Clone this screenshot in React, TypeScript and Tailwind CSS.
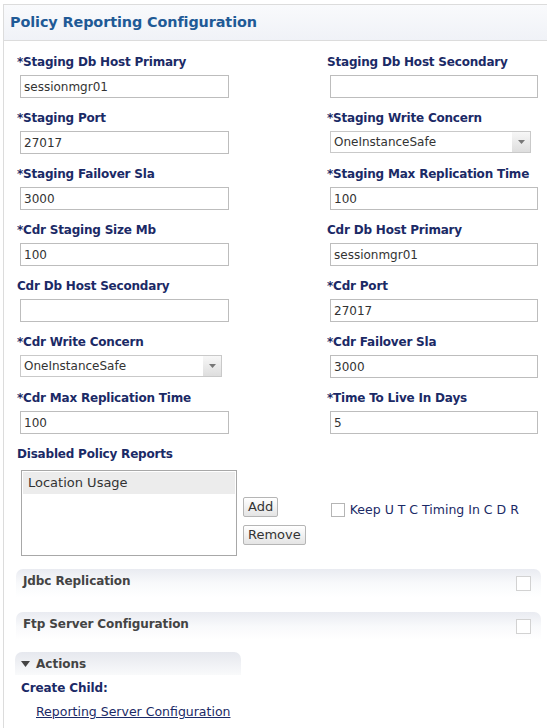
const font = { fontFamily: '"DejaVu Sans", Verdana, sans-serif' };

type Field = {
  label: string;
  value: string;
  required?: boolean;
  select?: boolean;
};

const leftFields: Field[] = [
  { label: "Staging Db Host Primary", value: "sessionmgr01", required: true },
  { label: "Staging Port", value: "27017", required: true },
  { label: "Staging Failover Sla", value: "3000", required: true },
  { label: "Cdr Staging Size Mb", value: "100", required: true },
  { label: "Cdr Db Host Secondary", value: "" },
  { label: "Cdr Write Concern", value: "OneInstanceSafe", required: true, select: true },
  { label: "Cdr Max Replication Time", value: "100", required: true },
];

const rightFields: Field[] = [
  { label: "Staging Db Host Secondary", value: "" },
  { label: "Staging Write Concern", value: "OneInstanceSafe", required: true, select: true },
  { label: "Staging Max Replication Time", value: "100", required: true },
  { label: "Cdr Db Host Primary", value: "sessionmgr01" },
  { label: "Cdr Port", value: "27017", required: true },
  { label: "Cdr Failover Sla", value: "3000", required: true },
  { label: "Time To Live In Days", value: "5", required: true },
];

function FormField({ field, wide }: { field: Field; wide: number }) {
  return (
    <div className="h-[56px]">
      <div className="h-[16px] text-[12px] font-bold leading-[16px] tracking-[-0.2px] text-[#1b2a66]">
        {field.required ? "*" : ""}
        {field.label}
      </div>
      {field.select ? (
        <div
          className="relative ml-[3px] mt-[5px] flex h-[22px] items-center border border-[#c9c9c9] bg-white pl-[3px] text-[12px] text-[#333]"
          style={{ width: wide - 7 }}
        >
          {field.value}
          <div className="absolute right-0 top-0 flex h-full w-[18px] items-center justify-center bg-gradient-to-b from-[#f7f7f7] to-[#dedede]">
            <svg width="7" height="4" viewBox="0 0 7 4">
              <path d="M0 0h7L3.5 4z" fill="#777" />
            </svg>
          </div>
        </div>
      ) : (
        <div
          className="ml-[3px] mt-[5px] flex h-[23px] items-center border border-[#bdbdbd] bg-white pl-[3px] text-[12px] text-[#333]"
          style={{ width: wide }}
        >
          {field.value}
        </div>
      )}
    </div>
  );
}

function SectionBar({ title, first }: { title: string; first?: boolean }) {
  return (
    <div
      className={`${first ? "mt-[13px]" : "mt-[15px]"} flex h-[28px] w-[525px] items-start justify-between rounded-t-[7px] bg-gradient-to-b from-[#e9ebf1] via-[#f8f9fb] to-white pl-[7px] pr-[10px]`}
    >
      <span className="mt-[3px] text-[12px] font-bold tracking-[-0.1px] text-[#444]">{title}</span>
      <span className="mt-[7px] h-[15px] w-[15px] border border-[#d2d2d2] bg-white" />
    </div>
  );
}

export default function App() {
  return (
    <div className="min-h-screen bg-white pl-[3px] pt-[4px]" style={font}>
      <div className="border-l border-t border-[#dcdcdc] pb-[10px]">
        <div className="flex h-[36px] items-center border-b border-[#dcdcdc] bg-gradient-to-b from-[#f9fafc] to-[#f0f2f7] pl-[6px]">
          <h1 className="text-[14.4px] font-bold tracking-[-0.1px] text-[#1f5a96]">Policy Reporting Configuration</h1>
        </div>

        <div className="pl-[13px] pt-[13px]">
          <div className="flex">
            <div className="w-[310px]">
              {leftFields.map((f) => (
                <FormField key={f.label} field={f} wide={209} />
              ))}
            </div>
            <div>
              {rightFields.map((f) => (
                <FormField key={f.label} field={f} wide={208} />
              ))}
            </div>
          </div>

          <div className="h-[16px] text-[12px] font-bold leading-[16px] tracking-[-0.2px] text-[#1b2a66]">
            Disabled Policy Reports
          </div>
          <div className="mt-[8px] flex">
            <div className="ml-[4px] h-[86px] w-[216px] border border-[#a8a8a8] bg-white p-px">
              <div className="flex h-[22px] items-center bg-[#ececec] pl-[5px] text-[13px] text-[#333]">
                Location Usage
              </div>
            </div>
            <div className="ml-[6px] mt-[27px] flex flex-col items-start gap-[8px]">
              <button className="h-[20px] rounded-[2px] border border-[#b5b5b5] bg-gradient-to-b from-white to-[#e4e4e4] px-[4px] text-[13px] leading-[18px] text-[#333]">
                Add
              </button>
              <button className="h-[20px] rounded-[2px] border border-[#b5b5b5] bg-gradient-to-b from-white to-[#e4e4e4] px-[4px] text-[13px] leading-[18px] text-[#333]">
                Remove
              </button>
            </div>
            <label className="ml-[25px] mt-[33px] flex h-[14px] items-center gap-[5px] text-[12.5px] text-[#1b2a66]">
              <span className="h-[14px] w-[14px] border border-[#b5b5b5] bg-white" />
              Keep U T C Timing In C D R
            </label>
          </div>

          <div className="-ml-[1px]">
            <SectionBar title="Jdbc Replication" first />
            <SectionBar title="Ftp Server Configuration" />
          </div>

          <div className="-ml-[2px] mt-[12px] flex h-[23px] w-[226px] items-center gap-[6px] rounded-t-[7px] bg-gradient-to-b from-[#e6e8ee] to-[#f9fafb] pl-[6px] text-[12px] font-bold text-[#444]">
            <svg width="9" height="6" viewBox="0 0 9 6">
              <path d="M0 0h9L4.5 6z" fill="#444" />
            </svg>
            Actions
          </div>
          <div className="ml-[4px] mt-[4px] text-[12px] font-bold leading-[18px] tracking-[-0.1px] text-[#1b2a66]">Create Child:</div>
          <a href="#" className="ml-[19px] mt-[6px] block text-[12.5px] leading-[18px] text-[#1b2a66] underline">
            Reporting Server Configuration
          </a>
        </div>
      </div>
    </div>
  );
}
